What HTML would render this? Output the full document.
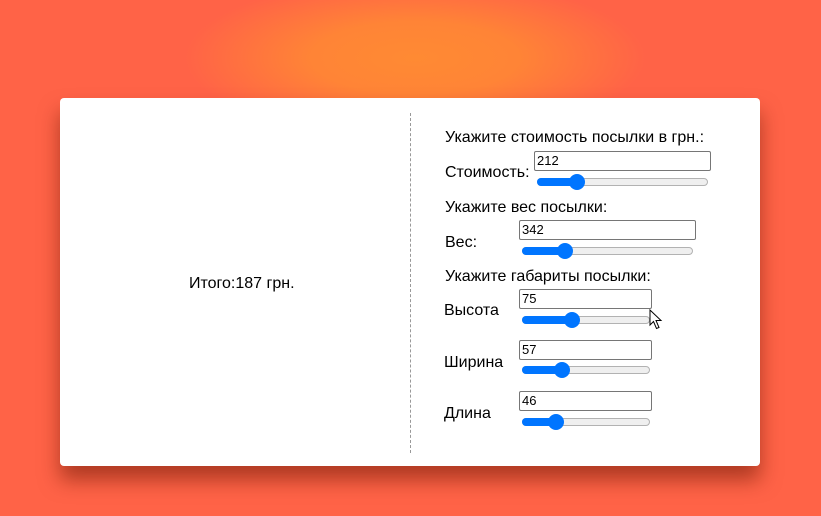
<!DOCTYPE html>
<html><head><meta charset="utf-8"><style>
*{margin:0;padding:0;box-sizing:border-box}
html,body{width:821px;height:516px;overflow:hidden}
body{background:#ff6347;position:relative;font-family:"Liberation Sans",Arial,sans-serif;color:#000}
.glow{position:absolute;left:0;top:0;width:821px;height:516px;background:radial-gradient(ellipse 230px 80px at 415px 58px,#ff8a33 0%,#ff8436 45%,rgba(255,99,71,0) 100%)}
.card{position:absolute;left:60px;top:98px;width:700px;height:368px;background:#fff;border-radius:4px;box-shadow:0 14px 20px rgba(110,25,5,.55)}
.vl{position:absolute;left:410px;top:113px;height:340px;border-left:1px dashed #999}
.t{position:absolute;font-size:16px;line-height:18px;white-space:nowrap}
.in{position:absolute;height:20px;border:1px solid #767676;border-radius:2px;background:#fff;font-size:13px;line-height:18px;padding-left:2px}
.tr{position:absolute;height:8px;border-radius:4px;background:#efefef;border:1px solid #b2b2b2;overflow:visible}
.fill{position:absolute;left:-1px;top:-1px;height:8px;border-radius:4px;background:#0075ff}
.th{position:absolute;top:-5px;width:16px;height:16px;border-radius:50%;background:#0075ff}
</style></head><body>
<div class="glow"></div>
<div class="card"></div>
<div class="vl"></div>
<div class="t" style="left:189px;top:275px">Итого:187 грн.</div>

<div class="t" style="left:445px;top:129px">Укажите стоимость посылки в грн.:</div>
<div class="t" style="left:445px;top:164px">Стоимость:</div>
<div class="in" style="left:534px;top:151px;width:177px">212</div>
<div class="tr" style="left:537px;top:178px;width:171px"><div class="fill" style="width:41px"></div><div class="th" style="left:31px"></div></div>

<div class="t" style="left:445px;top:199px">Укажите вес посылки:</div>
<div class="t" style="left:445px;top:234px">Вес:</div>
<div class="in" style="left:519px;top:220px;width:177px">342</div>
<div class="tr" style="left:522px;top:247px;width:171px"><div class="fill" style="width:44px"></div><div class="th" style="left:34px"></div></div>

<div class="t" style="left:445px;top:268px">Укажите габариты посылки:</div>
<div class="t" style="left:444px;top:302px">Высота</div>
<div class="in" style="left:519px;top:289px;width:133px">75</div>
<div class="tr" style="left:522px;top:316px;width:128px"><div class="fill" style="width:51px"></div><div class="th" style="left:41px"></div></div>

<div class="t" style="left:444px;top:354px">Ширина</div>
<div class="in" style="left:519px;top:340px;width:133px">57</div>
<div class="tr" style="left:522px;top:366px;width:128px"><div class="fill" style="width:41px"></div><div class="th" style="left:31px"></div></div>

<div class="t" style="left:444px;top:405px">Длина</div>
<div class="in" style="left:519px;top:391px;width:133px">46</div>
<div class="tr" style="left:522px;top:418px;width:128px"><div class="fill" style="width:35px"></div><div class="th" style="left:25px"></div></div>

<svg style="position:absolute;left:649px;top:309px" width="16" height="22" viewBox="0 0 16 22"><path d="M1 1 L1 16 L4.5 12.5 L7.5 19.5 L10 18.5 L7 11.5 L12 11.5 Z" fill="#fff" stroke="#000" stroke-width="1"/></svg>
</body></html>
